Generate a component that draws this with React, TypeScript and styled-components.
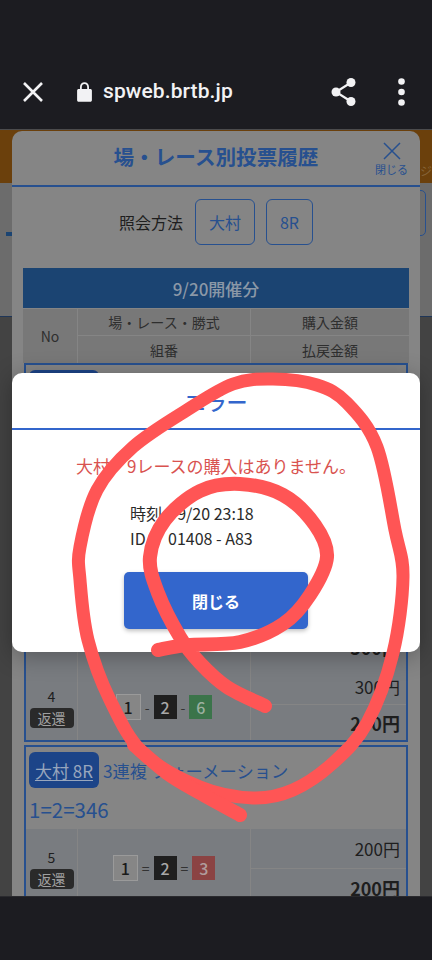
import React from "react";
import styled, { createGlobalStyle } from "styled-components";

const FONT = `"Noto Sans CJK JP", "Noto Sans", Roboto, sans-serif`;
const DIM_BLUE = "#27508f";

const Global = createGlobalStyle`
  html, body { margin: 0; padding: 0; background: #1c1c21; }
  * { box-sizing: border-box; }
  body { font-family: ${FONT}; }
`;

const Viewport = styled.div`
  position: relative;
  width: 432px;
  height: 960px;
  overflow: hidden;
  display: flex;
  flex-direction: column;
  background: #1c1c21;
`;

const TopBar = styled.header`
  height: 130px;
  flex: none;
  display: flex;
  align-items: center;
  padding: 54px 27px 0 23px;
  color: #f2f2f4;
  background: #1c1c21;
  border-bottom: 1px solid #4b4b4d;
`;
const UrlGroup = styled.div`
  display: flex;
  align-items: center;
  gap: 11px;
  margin-left: 34px;
  flex: 1;
`;
const Url = styled.span`
  font: 500 21px/1 Roboto, sans-serif;
  letter-spacing: 0.1px;
`;
const BarActions = styled.div`
  display: flex;
  align-items: center;
  gap: 42px;
`;

const Stage = styled.main`
  position: relative;
  flex: 1;
  overflow: hidden;
  background: #434343;
`;
const BottomBar = styled.footer`
  height: 64px;
  flex: none;
  background: #1c1c21;
  border-top: 1px solid #2a2a2e;
`;

const Banner = styled.div`
  height: 53px;
  background: #6b400c;
  display: flex;
  justify-content: flex-end;
  align-items: flex-end;
  padding: 0 0 4px;
  font-size: 12px;
  color: #87653a;
`;
const PageSection = styled.div`
  height: 134px;
  background: #6c6c6c;
  border-bottom: 1px solid #1f3658;
  padding: 7px 6px 0 6px;
  display: flex;
  justify-content: space-between;
  align-items: flex-start;
`;
const PageDash = styled.div`
  width: 6px;
  height: 4px;
  margin-top: 42px;
  background: #1b4472;
`;
const PageButton = styled.div`
  width: 30px;
  height: 46px;
  border: 1px solid ${DIM_BLUE};
  border-radius: 5px;
`;

const Sheet = styled.section`
  position: absolute;
  left: 12px;
  right: 12px;
  top: 1px;
  bottom: 0;
  background: #858585;
  border-radius: 10px 10px 0 0;
  overflow: hidden;
`;
const SheetHead = styled.div`
  position: relative;
  height: 56px;
  border-bottom: 2px solid ${DIM_BLUE};
  display: flex;
  align-items: center;
  justify-content: center;
`;
const SheetTitle = styled.h1`
  margin: 0 0 3px;
  font: 700 20.6px/1 ${FONT};
  color: ${DIM_BLUE};
`;
const SheetClose = styled.div`
  position: absolute;
  right: 12px;
  top: 11px;
  display: flex;
  flex-direction: column;
  align-items: center;
  gap: 3px;
  color: ${DIM_BLUE};
  font-size: 11px;
  line-height: 12px;
`;
const Query = styled.div`
  display: flex;
  align-items: center;
  justify-content: center;
  gap: 11px;
  height: 46px;
  margin: 12px 0 23px;
`;
const QueryLabel = styled.span`
  font-size: 16px;
  color: #1e1e1e;
  margin-right: 1px;
`;
const QueryButton = styled.div`
  height: 46px;
  padding: 0 13px;
  display: flex;
  align-items: center;
  border: 1px solid ${DIM_BLUE};
  border-radius: 6px;
  font-size: 16px;
  color: ${DIM_BLUE};
`;
const TableWrap = styled.div`
  margin: 0 11px;
`;
const DayBand = styled.div`
  height: 40px;
  background: #1b4472;
  color: #8b98a7;
  display: flex;
  align-items: center;
  justify-content: center;
  font-size: 17px;
  font-weight: 500;
`;
const HeadGrid = styled.div`
  display: grid;
  grid-template-columns: 54px 172px 1fr;
  grid-template-rows: 26px 27px;
  gap: 1px;
  margin-top: 1px;
  background: #858585;
`;
const HeadCell = styled.div<{ $tall?: boolean }>`
  grid-row: ${(p) => (p.$tall ? "1 / span 2" : "auto")};
  background: #787878;
  color: #2e2e2e;
  font-size: 14px;
  display: flex;
  align-items: center;
  justify-content: center;
`;
const Card = styled.div<{ $height: number }>`
  height: ${(p) => p.$height}px;
  margin: 0 1px 3px;
  border: 2px solid ${DIM_BLUE};
`;
const CardHead = styled.div<{ $height: number }>`
  height: ${(p) => p.$height}px;
  padding: 5px 3px 0;
`;
const HeadLine = styled.div`
  display: flex;
  align-items: center;
  gap: 4px;
  font-size: 17.3px;
  color: ${DIM_BLUE};
`;
const RaceChip = styled.span`
  height: 36px;
  width: 70px;
  display: flex;
  align-items: center;
  justify-content: center;
  background: #1c4488;
  border-radius: 6px;
  color: #98a6bd;
  font-size: 17px;
  text-decoration: underline;
  text-underline-offset: 2px;
`;
const ComboText = styled.div`
  margin-top: 2px;
  font-size: 20.5px;
  line-height: 38px;
  color: ${DIM_BLUE};
`;
const Row = styled.div<{ $height: number }>`
  height: ${(p) => p.$height}px;
  display: grid;
  grid-template-columns: 51px 172px 1fr;
  gap: 1px;
  background: #858585;
`;
const NoCell = styled.div<{ $nudge?: number }>`
  background: #797c80;
  display: flex;
  flex-direction: column;
  align-items: center;
  justify-content: center;
  gap: 3px;
  font-size: 14px;
  line-height: 18px;
  color: #1e1e1e;
  padding-top: ${(p) => p.$nudge ?? 0}px;
`;
const ReturnBadge = styled.span`
  width: 44px;
  height: 20px;
  display: flex;
  align-items: center;
  justify-content: center;
  border-radius: 4px;
  background: #2a2a2a;
  color: #a0a0a0;
  font-size: 14px;
`;
const ComboCell = styled.div<{ $nudge?: number }>`
  background: #797c80;
  display: flex;
  align-items: center;
  justify-content: center;
  gap: 4px;
  font-size: 14px;
  color: #333;
  padding-top: ${(p) => p.$nudge ?? 0}px;
`;
const Num = styled.span<{ $bg: string; $fg: string; $outlined?: boolean }>`
  width: ${(p) => (p.$outlined ? 25 : 23)}px;
  height: ${(p) => (p.$outlined ? 26 : 24)}px;
  display: flex;
  align-items: center;
  justify-content: center;
  background: ${(p) => p.$bg};
  color: ${(p) => p.$fg};
  font-size: 16px;
  font-weight: 500;
  border: ${(p) => (p.$outlined ? "1px solid #9a9a9a" : "none")};
`;
const AmountCol = styled.div`
  display: grid;
  grid-auto-rows: 1fr;
  gap: 1px;
`;
const Amount = styled.div<{ $bold?: boolean; $clear?: number }>`
  background: #797c80;
  display: flex;
  align-items: center;
  justify-content: flex-end;
  padding: 0 6px ${(p) => p.$clear ?? 0}px 0;
  color: #1e1e1e;
  line-height: 1;
  font-size: ${(p) => (p.$bold ? 18 : 17)}px;
  font-weight: ${(p) => (p.$bold ? 700 : 400)};
`;
const Spacer = styled.div<{ $height: number }>`
  height: ${(p) => p.$height}px;
`;

const Dialog = styled.section`
  position: absolute;
  left: 12px;
  right: 12px;
  top: 243px;
  height: 279px;
  background: #fff;
  border-radius: 10px;
  box-shadow: 0 4px 24px rgba(0, 0, 0, 0.3);
`;
const DialogHead = styled.div`
  height: 57px;
  border-bottom: 2px solid #3366cc;
  display: flex;
  align-items: center;
  justify-content: center;
  font-size: 21px;
  font-weight: 500;
  color: #3366cc;
`;
const DialogMessage = styled.p`
  margin: 24px 0 0;
  text-align: center;
  font-size: 17px;
  line-height: 24px;
  color: #d9534f;
`;
const DialogInfo = styled.div`
  margin: 23px 0 0 118px;
  font-size: 16px;
  line-height: 25px;
  color: #2a2a2a;
`;
const DialogButton = styled.button`
  display: block;
  width: 184px;
  height: 57px;
  margin: 21px auto 0;
  border: none;
  border-radius: 5px;
  background: #3366cc;
  color: #fff;
  font: 700 16px/1 ${FONT};
  box-shadow: 0 2px 4px rgba(0, 0, 0, 0.25);
`;
const Scribble = styled.svg`
  position: absolute;
  left: 0;
  top: 0;
  width: 432px;
  height: 960px;
  pointer-events: none;
`;

const Cross = ({ size, width }: { size: number; width: number }) => (
  <svg width={size} height={size} viewBox={`0 0 ${size} ${size}`} stroke="currentColor" strokeWidth={width} fill="none">
    <path d={`M1 1 L${size - 1} ${size - 1} M${size - 1} 1 L1 ${size - 1}`} />
  </svg>
);
const LockIcon = () => (
  <svg width="15" height="20" viewBox="0 0 15 20" fill="currentColor">
    <path d="M1.6 7H3V4.9C3 2.2 5 .2 7.5 .2S12 2.2 12 4.9V7h1.4c.8 0 1.5.7 1.5 1.5v9.8c0 .8-.7 1.5-1.5 1.5H1.6c-.8 0-1.5-.7-1.5-1.5V8.500C.1 7.700.8 7 1.600 7zM4.800 7h5.400V4.900c0-1.600-1.200-2.900-2.700-2.900S4.800 3.300 4.800 4.900V7z" />
  </svg>
);
const ShareIcon = () => (
  <svg width="25" height="28" viewBox="0 0 25 28" fill="currentColor" stroke="currentColor">
    <circle cx="20" cy="4.500" r="4.500" stroke="none" />
    <circle cx="5" cy="14" r="4.500" stroke="none" />
    <circle cx="20" cy="23.500" r="4.500" stroke="none" />
    <path d="M20 4.500 L5 14 L20 23.500" fill="none" strokeWidth="2.200" />
  </svg>
);
const KebabIcon = () => (
  <svg width="7" height="28" viewBox="0 0 7 28" fill="currentColor">
    <circle cx="3.500" cy="3.500" r="3.300" />
    <circle cx="3.500" cy="14" r="3.300" />
    <circle cx="3.500" cy="24.500" r="3.300" />
  </svg>
);

type Pt = [number, number];
function smooth(points: Pt[], closed = false): string {
  const n = points.length;
  const at = (i: number): Pt => (closed ? points[(i + n) % n] : points[Math.min(n - 1, Math.max(0, i))]);
  let d = `M${points[0][0]} ${points[0][1]}`;
  const last = closed ? n : n - 1;
  for (let i = 0; i < last; i++) {
    const [p0, p1, p2, p3] = [at(i - 1), at(i), at(i + 1), at(i + 2)];
    const c1x = p1[0] + (p2[0] - p0[0]) / 6;
    const c1y = p1[1] + (p2[1] - p0[1]) / 6;
    const c2x = p2[0] - (p3[0] - p1[0]) / 6;
    const c2y = p2[1] - (p3[1] - p1[1]) / 6;
    d += ` C${c1x.toFixed(1)} ${c1y.toFixed(1)} ${c2x.toFixed(1)} ${c2y.toFixed(1)} ${p2[0]} ${p2[1]}`;
  }
  return d;
}

const OUTER: Pt[] = [
  [273, 379], [233, 384], [187, 410], [133, 447], [97, 490], [80, 547], [80, 580], [88, 640], [110, 700], [143, 753],
  [200, 787], [253, 798], [293, 790], [333, 763], [367, 723], [393, 653], [403, 577], [395, 530], [377, 447], [347, 403], [317, 385],
];
const INNER: Pt[] = [
  [158, 650], [187, 645], [240, 642], [283, 624], [310, 595], [327, 557], [315, 525], [283, 495], [240, 484], [200, 491],
  [165, 520], [150, 557], [158, 593], [180, 637], [200, 663], [227, 687], [265, 706],
];
const TAIL: Pt[] = [[134, 745], [167, 773], [200, 793], [240, 815]];

export default function App() {
  return (
    <Viewport>
      <Global />
      <TopBar>
        <Cross size={20} width={2.6} />
        <UrlGroup>
          <LockIcon />
          <Url>spweb.brtb.jp</Url>
        </UrlGroup>
        <BarActions>
          <ShareIcon />
          <KebabIcon />
        </BarActions>
      </TopBar>
      <Stage>
        <Banner>ジ</Banner>
        <PageSection>
          <PageDash />
          <PageButton />
        </PageSection>
        <Sheet>
          <SheetHead>
            <SheetTitle>場・レース別投票履歴</SheetTitle>
            <SheetClose>
              <Cross size={18} width={1.5} />
              閉じる
            </SheetClose>
          </SheetHead>
          <Query>
            <QueryLabel>照会方法</QueryLabel>
            <QueryButton>大村</QueryButton>
            <QueryButton>8R</QueryButton>
          </Query>
          <TableWrap>
            <DayBand>9/20開催分</DayBand>
            <HeadGrid>
              <HeadCell $tall>No</HeadCell>
              <HeadCell>場・レース・勝式</HeadCell>
              <HeadCell>購入金額</HeadCell>
              <HeadCell>組番</HeadCell>
              <HeadCell>払戻金額</HeadCell>
            </HeadGrid>
            <Card $height={379}>
              <CardHead $height={40}>
                <HeadLine>
                  <RaceChip>大村 8R</RaceChip>
                </HeadLine>
              </CardHead>
              <Spacer $height={228} />
              <Row $height={36}>
                <NoCell />
                <ComboCell />
                <AmountCol>
                  <Amount $bold $clear={9}>500円</Amount>
                </AmountCol>
              </Row>
              <Row $height={71}>
                <NoCell $nudge={5}>
                  4<ReturnBadge>返還</ReturnBadge>
                </NoCell>
                <ComboCell $nudge={5}>
                  <Num $outlined $bg="#868686" $fg="#1a1a1a">1</Num>-
                  <Num $bg="#1f1f1f" $fg="#a8a8a8">2</Num>-
                  <Num $bg="#3b744a" $fg="#9cb0a0">6</Num>
                </ComboCell>
                <AmountCol>
                  <Amount>300円</Amount>
                  <Amount $bold>200円</Amount>
                </AmountCol>
              </Row>
            </Card>
            <Card $height={164}>
              <CardHead $height={82}>
                <HeadLine>
                  <RaceChip>大村 8R</RaceChip>3連複 フォーメーション
                </HeadLine>
                <ComboText>1=2=346</ComboText>
              </CardHead>
              <Row $height={78}>
                <NoCell $nudge={1}>
                  5<ReturnBadge>返還</ReturnBadge>
                </NoCell>
                <ComboCell>
                  <Num $outlined $bg="#868686" $fg="#1a1a1a">1</Num>=
                  <Num $bg="#1f1f1f" $fg="#a8a8a8">2</Num>=
                  <Num $bg="#8b4343" $fg="#b09c9c">3</Num>
                </ComboCell>
                <AmountCol>
                  <Amount>200円</Amount>
                  <Amount $bold>200円</Amount>
                </AmountCol>
              </Row>
            </Card>
          </TableWrap>
        </Sheet>
        <Dialog>
          <DialogHead>エラー</DialogHead>
          <DialogMessage>大村　9レースの購入はありません。</DialogMessage>
          <DialogInfo>
            時刻 :&nbsp;&nbsp;9/20 23:18
            <br />
            ID&nbsp;&nbsp;:&nbsp;&nbsp;&nbsp;01408 - A83
          </DialogInfo>
          <DialogButton>閉じる</DialogButton>
        </Dialog>
      </Stage>
      <BottomBar />
      <Scribble viewBox="0 0 432 960" fill="none" stroke="#ff5555" strokeLinecap="round" strokeLinejoin="round">
        <path strokeWidth="13" d={smooth(OUTER, true)} />
        <path strokeWidth="14" d={smooth(INNER)} />
        <path strokeWidth="14" d={smooth(TAIL)} />
      </Scribble>
    </Viewport>
  );
}
